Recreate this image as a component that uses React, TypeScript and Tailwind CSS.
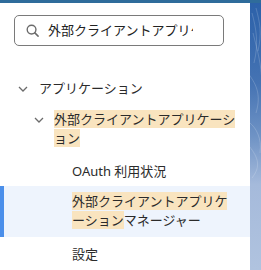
import React from "react";

const font = { fontFamily: '"Noto Sans", "Noto Sans CJK JP", sans-serif' };

function Chevron() {
  return (
    <svg width="10" height="6" viewBox="0 0 10 6" className="shrink-0">
      <path d="M1 1 L5 5 L9 1" fill="none" stroke="#6b6b6b" strokeWidth="1.3" />
    </svg>
  );
}

function SearchIcon() {
  return (
    <svg width="15" height="15" viewBox="0 0 24 24" className="shrink-0">
      <circle cx="10.5" cy="10.5" r="7" fill="none" stroke="#6b6b6b" strokeWidth="2.2" />
      <path d="M15.8 15.8 L21 21" fill="none" stroke="#6b6b6b" strokeWidth="2.4" strokeLinecap="round" />
    </svg>
  );
}

export default function App() {
  return (
    <div className="w-[261px] h-[270px] overflow-hidden bg-white flex flex-col" style={font}>
      <div className="h-[3px] bg-[#2f6c9b] shrink-0" />
      <div className="flex flex-1 min-h-0">
        <div className="w-[250px] shrink-0 bg-white flex flex-col text-[13px] text-[#2b2b2b]">
          <div className="mt-[12px] ml-[14px] w-[210px] h-[31px] shrink-0 border border-[#7a7a7a] rounded-[5px] flex items-center pl-[10px] pr-[30px] gap-[8px]">
            <SearchIcon />
            <input
              readOnly
              value="外部クライアントアプリケーション"
              className="flex-1 min-w-0 bg-transparent outline-none text-[13px] text-[#222]"
              style={font}
            />
          </div>

          <div className="mt-[27px] flex items-center pl-[18px] h-[31px] shrink-0 leading-[19px]">
            <Chevron />
            <span className="ml-[11px]">アプリケーション</span>
          </div>

          <div className="flex items-start pl-[34px] pr-[12px] py-[6px] leading-[19px] shrink-0">
            <div className="h-[19px] flex items-center">
              <Chevron />
            </div>
            <span className="ml-[10px]">
              <span className="bg-[#f9e4bf]">外部クライアントアプリケーション</span>
            </span>
          </div>

          <div className="pl-[72px] pr-[12px] pt-[8px] pb-[5px] leading-[19px] shrink-0">OAuth 利用状況</div>

          <div className="relative bg-[#eef4fd] pl-[72px] pr-[12px] py-[6px] leading-[19px] min-h-[51px] shrink-0">
            <div className="absolute left-0 top-0 bottom-0 w-[4px] bg-[#4b8fea]" />
            <span className="bg-[#f9e4bf]">外部クライアントアプリケーション</span>マネージャー
          </div>

          <div className="mt-[2px] pl-[72px] pr-[12px] py-[6px] leading-[19px] shrink-0">設定</div>
        </div>

        <div className="flex-1 relative overflow-hidden bg-[linear-gradient(180deg,#2c61a9_0%,#4573b3_30%,#6f93c5_50%,#a5badb_68%,#b0c3df_100%)]">
          <svg width="11" height="267" viewBox="0 0 11 267" className="absolute left-0 top-0">
            <g fill="none" stroke="#ffffff" strokeOpacity="0.22" strokeWidth="0.8">
              <path d="M2 10 C6 25 9 40 4 60" />
              <path d="M6 5 C10 20 12 30 8 48" />
              <path d="M-2 70 C5 80 12 90 6 110" />
              <path d="M0 120 C6 125 12 135 10 150" />
              <path d="M-3 140 C4 150 14 160 2 175" />
              <path d="M3 30 C8 50 11 60 12 80" />
            </g>
          </svg>
        </div>
      </div>
    </div>
  );
}
